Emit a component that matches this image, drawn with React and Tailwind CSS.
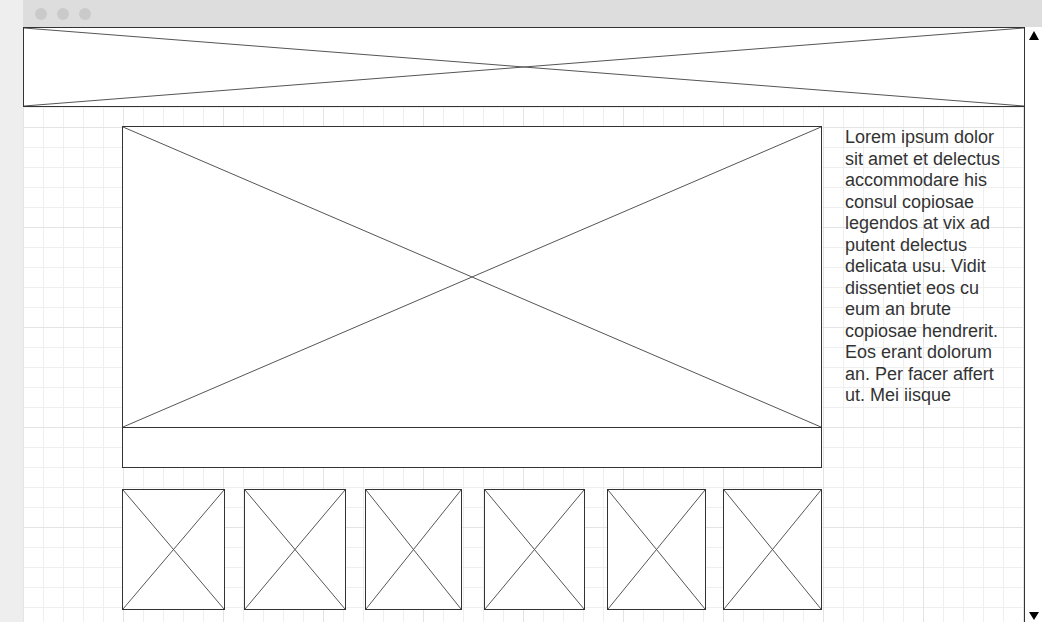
import React from 'react';

const Cross = () => (
    <svg className="absolute inset-0 h-full w-full" preserveAspectRatio="none">
        <line x1="0" y1="0" x2="100%" y2="100%" stroke="#555" strokeWidth="1" />
        <line x1="0" y1="100%" x2="100%" y2="0" stroke="#555" strokeWidth="1" />
    </svg>
);

const Placeholder = ({ className }) => (
    <div className={`relative bg-white ${className}`}>
        <Cross />
    </div>
);

const text =
    'Lorem ipsum dolor sit amet et delectus accommodare his consul copiosae legendos at vix ad putent delectus delicata usu. Vidit dissentiet eos cu eum an brute copiosae hendrerit. Eos erant dolorum an. Per facer affert ut. Mei iisque';

// thumbnails are not quite even in the mockup
const thumbs = [
    'w-[103px]',
    'ml-[19px] w-[102px]',
    'ml-[19px] w-[97px]',
    'ml-[22px] w-[101px]',
    'ml-[22px] w-[99px]',
    'ml-[17px] w-[99px]',
];

const App = () => {
    return (
        <div className="flex h-[622px] w-[1042px] overflow-hidden bg-white font-['Liberation_Sans',Arial,sans-serif]">
            <div className="w-[23px] shrink-0 bg-[#eeeeee]"></div>
            <div className="flex flex-1 flex-col">
                <div className="flex h-[27px] shrink-0 items-center gap-[10px] bg-[#dddddd] pl-[12px]">
                    <span className="h-[12px] w-[12px] rounded-full bg-[#cacaca]"></span>
                    <span className="h-[12px] w-[12px] rounded-full bg-[#cacaca]"></span>
                    <span className="h-[12px] w-[12px] rounded-full bg-[#cacaca]"></span>
                </div>
                <div className="flex flex-1">
                    <div className="flex-1 bg-[linear-gradient(to_right,#e4e4e4_1px,transparent_1px),linear-gradient(to_bottom,#e4e4e4_1px,transparent_1px),linear-gradient(to_right,#efefef_1px,transparent_1px),linear-gradient(to_bottom,#efefef_1px,transparent_1px)] bg-[size:100px_100px,100px_100px,20px_20px,20px_20px]">
                        <Placeholder className="h-[80px] border-y border-l border-[#333]" />
                        <div className="mt-[19px] flex pl-[99px]">
                            <div className="flex w-[700px] shrink-0 flex-col">
                                <div className="flex flex-col border border-[#333] bg-white">
                                    <Placeholder className="h-[300px]" />
                                    <div className="h-[40px] border-t border-[#333]"></div>
                                </div>
                                <div className="mt-[21px] flex">
                                    {thumbs.map((w, i) => (
                                        <Placeholder key={i} className={`h-[121px] shrink-0 border border-[#333] ${w}`} />
                                    ))}
                                </div>
                            </div>
                            <p className="ml-[23px] w-[165px] pt-[1px] text-[18px] leading-[21.5px] text-[#333]">{text}</p>
                        </div>
                    </div>
                    <div className="flex w-[18px] shrink-0 flex-col items-center justify-between border-l border-[#333] bg-white pb-[2px] pl-[1px] pt-[4px]">
                        <svg width="10" height="9" viewBox="0 0 10 9">
                            <polygon points="5,0 10,9 0,9" fill="#000" />
                        </svg>
                        <svg width="10" height="8" viewBox="0 0 10 8">
                            <polygon points="0,0 10,0 5,8" fill="#000" />
                        </svg>
                    </div>
                </div>
            </div>
        </div>
    );
};

export default App;
